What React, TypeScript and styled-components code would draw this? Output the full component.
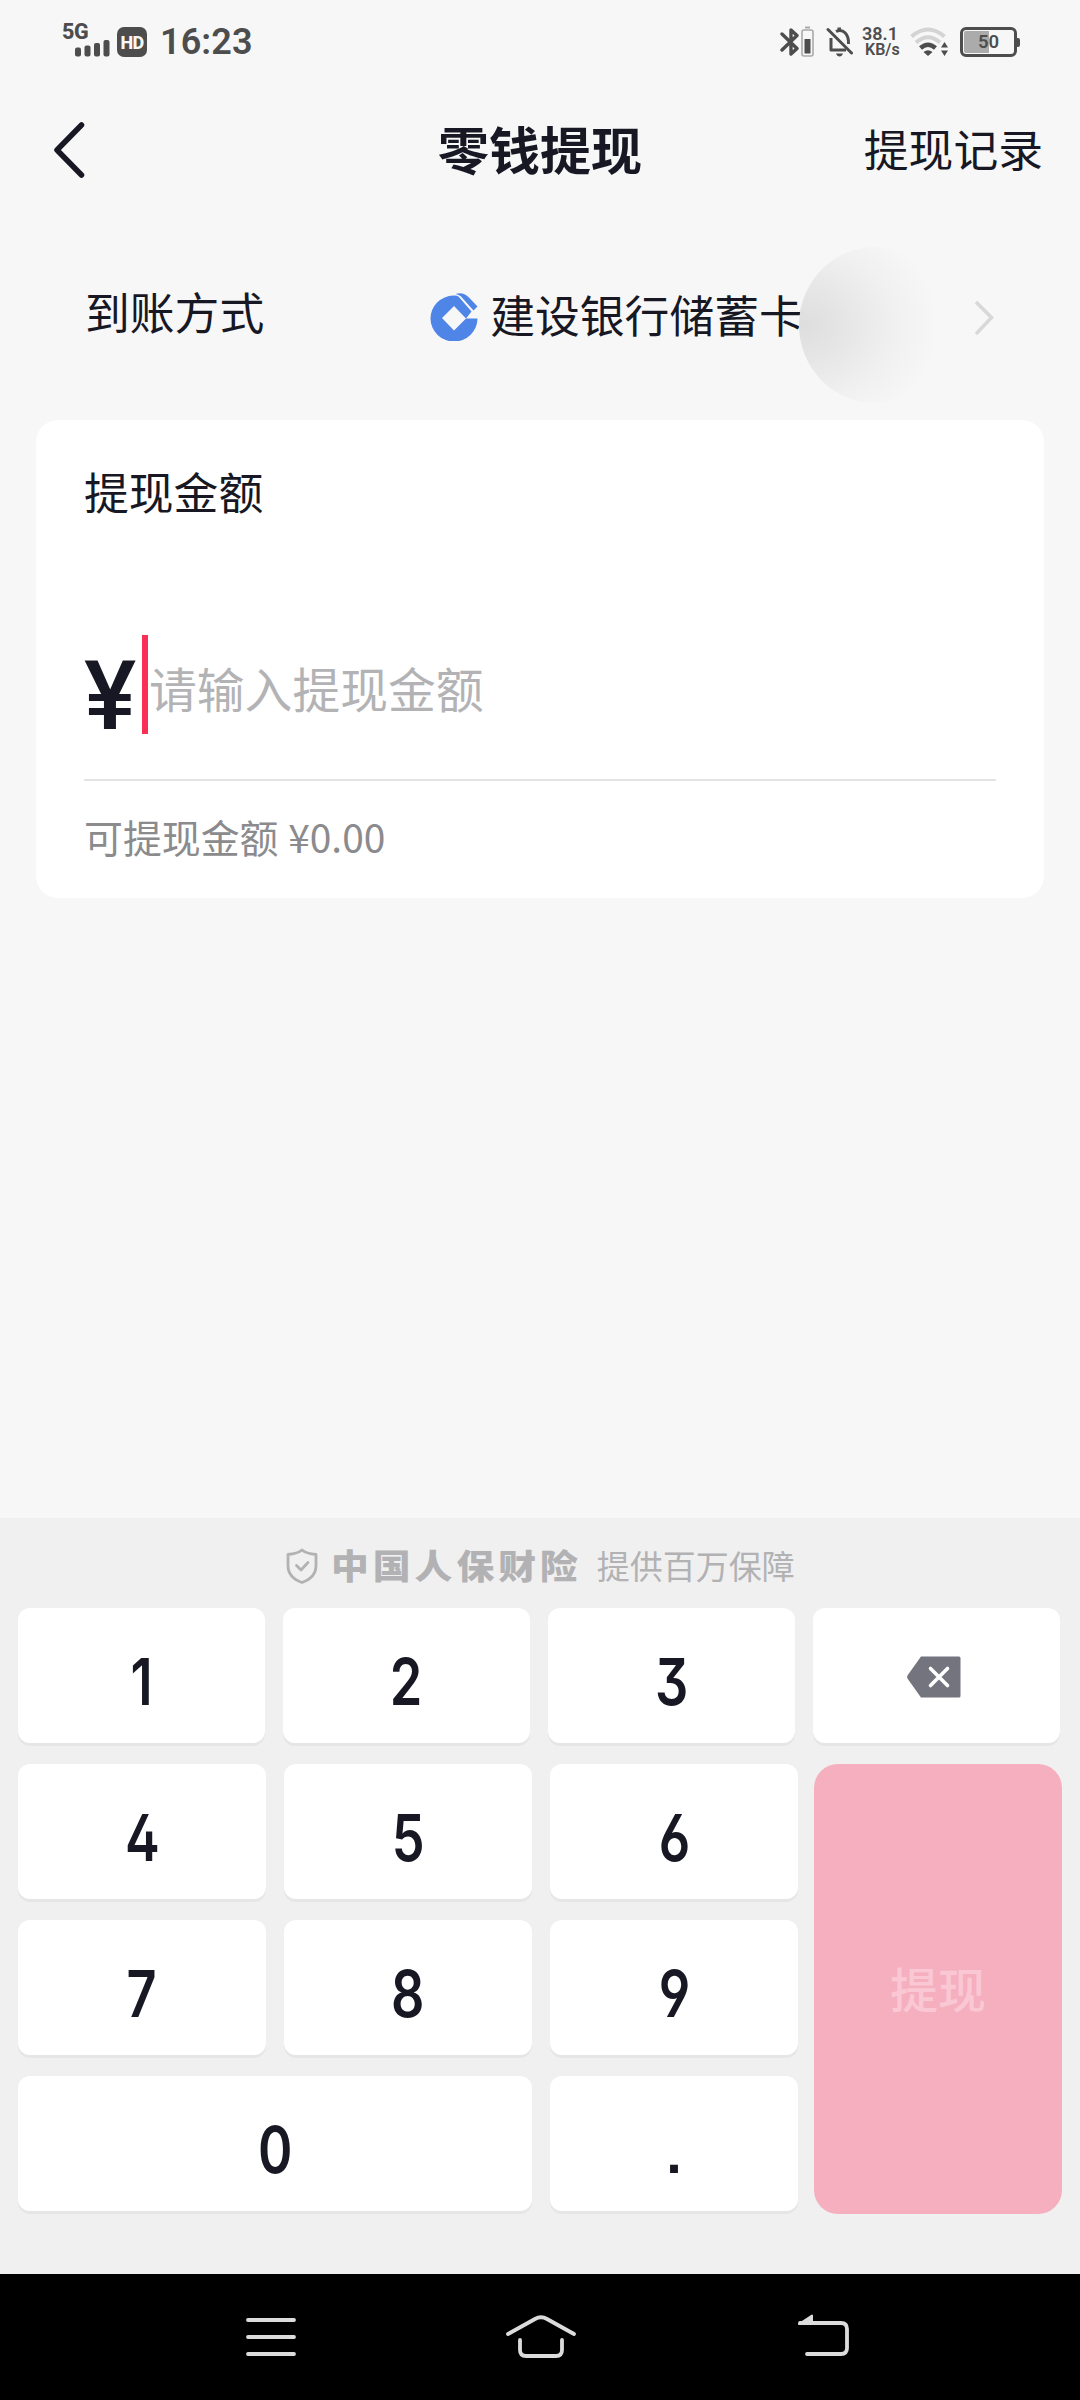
import React from "react";
import styled, { createGlobalStyle } from "styled-components";

const ink = "#171823";
const cjk = '"Noto Sans CJK SC", sans-serif';

const GlobalStyle = createGlobalStyle`
  * { box-sizing: border-box; }
  body { margin: 0; background: #f7f7f8; }
  button { border: 0; margin: 0; padding: 0; background: none; font: inherit; color: inherit; }
  svg { display: block; flex: none; }
`;

const Screen = styled.div`
  width: 1080px;
  height: 2400px;
  display: flex;
  flex-direction: column;
  background: #f7f7f8;
  color: ${ink};
  font-family: ${cjk};
  overflow: hidden;
`;

const StatusBar = styled.div`
  height: 84px;
  flex: none;
  display: flex;
  justify-content: space-between;
  padding: 0 60px 0 62px;
  color: #4d4d4d;
  font-family: Roboto, sans-serif;
`;

const StatusGroup = styled.div`
  display: flex;
  height: 84px;
  align-items: center;
`;

const Network = styled.div`
  display: flex;
  flex-direction: column;
  width: 48px;
  height: 34px;
  margin: 0 7px 5px 0;
`;

const NetworkType = styled.span`
  padding-top: 1px;
  font-size: 21.5px;
  line-height: 16px;
  font-weight: 800;
  letter-spacing: -0.5px;
`;

const SignalIcon = styled.svg`
  margin-left: 13px;
`;

const HdBadge = styled.span`
  width: 30px;
  height: 30px;
  border-radius: 7px;
  background: #4d4d4d;
  color: #f7f7f8;
  display: flex;
  align-items: center;
  justify-content: center;
  font-size: 18px;
  font-weight: 800;
  letter-spacing: -0.6px;
`;

const Clock = styled.span`
  margin-left: 13px;
  font-size: 36px;
  line-height: 40px;
  font-weight: 600;
  letter-spacing: 0.1px;
`;

const BellBox = styled.span`
  margin-left: 12px;
`;

const Speed = styled.div`
  width: 40px;
  margin: 0 8px 0 8px;
  display: flex;
  flex-direction: column;
  gap: 2px;
  font-weight: 600;
  font-size: 18px;
  line-height: 14px;
`;

const SpeedUnit = styled.span`
  padding-left: 3px;
  font-size: 16px;
`;

const BatteryBox = styled.div`
  display: flex;
  align-items: center;
  margin-left: 12px;
`;

const Battery = styled.div`
  width: 57px;
  height: 30px;
  border: 3px solid #4d4d4d;
  border-radius: 6px;
  display: flex;
  align-items: center;
  justify-content: center;
  background: linear-gradient(90deg, #ababab 50%, #f7f7f8 50%);
  background-clip: content-box;
  padding: 1px;
  font-size: 18.5px;
  line-height: 22px;
  font-weight: 600;
`;

const BatteryTip = styled.span`
  width: 3px;
  height: 9px;
  background: #4d4d4d;
  border-radius: 0 2px 2px 0;
`;

const Header = styled.header`
  height: 132px;
  flex: none;
  display: grid;
  grid-template-columns: 1fr auto 1fr;
  align-items: center;
  padding: 0 37px 0 52px;
`;

const Title = styled.h1`
  margin: 0 0 5px -15px;
  font-size: 51px;
  line-height: 70px;
  font-weight: 700;
`;

const RecordLink = styled.button`
  justify-self: end;
  margin-bottom: 4px;
  font-size: 44.8px;
  line-height: 66px;
`;

const MethodRow = styled.section`
  position: relative;
  height: 204px;
  flex: none;
  display: flex;
  align-items: flex-start;
  padding: 62px 85px 0;
`;

const Label = styled.span`
  font-size: 44.8px;
  line-height: 66px;
`;

const Bank = styled.div`
  display: flex;
  align-items: center;
  gap: 12px;
  margin: 3px 0 0 166px;
`;

const LogoBox = styled.span`
  padding-top: 6px;
`;

const Smudge = styled.div`
  position: absolute;
  left: 799px;
  top: 31px;
  width: 152px;
  height: 156px;
  border-radius: 50%;
  background: radial-gradient(ellipse 136px 112px at 4px 78px, #dedede 0%, #e6e6e7 32%, #f0f0f1 66%, #f7f7f8 100%);
`;

const RowArrow = styled.div`
  margin: 22px 0 0 auto;
`;

const Card = styled.section`
  height: 478px;
  flex: none;
  margin: 0 36px;
  padding: 38px 48px 0;
  border-radius: 22px;
  background: #fff;
  display: flex;
  flex-direction: column;
`;

const AmountRow = styled.div`
  display: flex;
  align-items: flex-start;
  height: 146px;
  margin-top: 111px;
  border-bottom: 2px solid #e3e3e4;
`;

const Yen = styled.span`
  width: 58px;
  padding-top: 12px;
  font-family: Roboto, sans-serif;
  font-size: 95.500px;
  line-height: 99px;
  font-weight: 500;
  transform: scaleX(1.03);
  transform-origin: left;
`;

const Caret = styled.span`
  width: 6px;
  height: 99px;
  background: #fa2f56;
`;

const Placeholder = styled.span`
  margin: 18px 0 0 1px;
  font-size: 47.8px;
  line-height: 70px;
  color: #b3b3b5;
`;

const Available = styled.p`
  margin: 27px 0 0 0;
  font-size: 38.9px;
  line-height: 56px;
  color: #8b8b8e;
  word-spacing: 1px;
`;

const Panel = styled.section`
  margin-top: auto;
  height: 756px;
  flex: none;
  background: #f0f0f0;
  display: flex;
  flex-direction: column;
  padding: 0 18px;
`;

const Insurance = styled.div`
  height: 90px;
  display: flex;
  align-items: center;
  padding: 4px 0 0 268px;
  color: #b2b2b5;
`;

const Insurer = styled.span`
  margin-left: 13px;
  font-size: 37.8px;
  line-height: 50px;
  font-weight: 900;
  letter-spacing: 4px;
  transform: scaleY(0.9);
`;

const Cover = styled.span`
  margin-left: 15px;
  font-size: 33px;
  line-height: 50px;
`;

const KeyRow = styled.div`
  display: grid;
  grid-template-columns: repeat(4, 247px);
  gap: 18px;
  margin-bottom: 21px;
`;

const LowerKeys = styled.div`
  display: flex;
  gap: 16px;
`;

const NumberGrid = styled.div`
  display: grid;
  grid-template-columns: repeat(3, 248px);
  gap: 21px 18px;
  align-content: start;
`;

const Key = styled.button<{ $span?: number }>`
  grid-column: span ${(p) => p.$span ?? 1};
  height: 135px;
  border-radius: 12px;
  background: #fff;
  box-shadow: 0 3px 0 #e6e6e6;
  display: flex;
  align-items: center;
  justify-content: center;
`;

const Digit = styled.span`
  display: block;
  padding-top: 12px;
  font-family: Inter, sans-serif;
  font-feature-settings: "ss01", "cv02", "cv03", "cv04";
  font-size: 64.5px;
  line-height: 78px;
  font-weight: 560;
  transform: scaleX(0.81);
`;

const Point = styled(Digit)`
  padding-top: 20px;
  font-family: "Liberation Sans", sans-serif;
  font-size: 56px;
  font-weight: 700;
  transform: none;
`;

const BackspaceBox = styled.span`
  padding: 2px 5px 0 0;
`;

const Submit = styled.button`
  width: 248px;
  height: 450px;
  border-radius: 24px;
  background: #f5afbf;
  color: #f9c8d4;
  font-size: 48px;
  font-weight: 500;
  line-height: 66px;
  padding-bottom: 5px;
`;

const NavBar = styled.nav`
  height: 126px;
  flex: none;
  background: #000;
  display: flex;
  align-items: flex-start;
  padding: 38px 0 0 242px;
`;

const NavButton = styled.button<{ $gap?: number }>`
  margin-left: ${(p) => p.$gap ?? 0}px;
`;

const SignalBars = () => (
  <SignalIcon width="36" height="17" viewBox="0 0 36 17" fill="#4d4d4d">
    <rect x="0" y="7.5" width="6" height="9" rx="2" />
    <rect x="9.5" y="5.5" width="6" height="11" rx="2" />
    <rect x="19" y="3" width="6" height="13.5" rx="2" />
    <rect x="28.5" y="0" width="6" height="16.5" rx="2" />
  </SignalIcon>
);

const Bluetooth = () => (
  <svg width="34" height="32" viewBox="0 0 34 32" fill="none">
    <path d="M2 8 17 22.500 11 28V4L17 9.500 2 24" stroke="#4d4d4d" strokeWidth="3.400" strokeLinecap="round" strokeLinejoin="round" />
    <path d="M25 1.500h5" stroke="#aaa" strokeWidth="2" />
    <rect x="22" y="4" width="11" height="26" rx="2" stroke="#aaa" strokeWidth="1.600" />
    <rect x="24.500" y="13" width="6" height="14.500" fill="#4d4d4d" />
  </svg>
);

const MutedBell = () => (
  <svg width="28" height="32" viewBox="0 0 28 32" fill="none" stroke="#4d4d4d" strokeWidth="3">
    <path d="M2 3.500 25.500 27" strokeLinecap="round" />
    <path d="M5 12V24H20" strokeLinejoin="round" />
    <path d="M10 5.500C17 2 23 8 22.500 18" />
    <path d="M11.500 1.500h3.500v3h-3.500z" fill="#4d4d4d" stroke="none" />
    <path d="M10 27.500h7q-1 3-3.500 3T10 27.500z" fill="#4d4d4d" stroke="none" />
  </svg>
);

const Wifi = () => (
  <svg width="38" height="32" viewBox="0 0 38 32" fill="none">
    <path d="M1.500 10.500Q18 -3.500 34.500 10.500" stroke="#d4d4d4" strokeWidth="4" />
    <path d="M6 16.500Q18 6 30 16.500" stroke="#d4d4d4" strokeWidth="4" />
    <path d="M10.500 22Q18 15.500 25.500 22" stroke="#4d4d4d" strokeWidth="4.500" />
    <path d="M13.500 26Q18 22.500 22.500 26L18 30z" fill="#4d4d4d" />
    <path d="M31 21.500h7L34.500 16zM31 24.500h7L34.500 30z" fill="#4d4d4d" />
  </svg>
);

const BackChevron = () => (
  <svg width="36" height="60" viewBox="0 0 36 60" fill="none">
    <path d="M29.500 5 5 30 29.500 55" stroke={ink} strokeWidth="5.500" strokeLinecap="round" strokeLinejoin="round" />
  </svg>
);

const BankLogo = () => (
  <svg width="48" height="48" viewBox="0 0 48 48">
    <path
      d="M23.500 2.500Q27 2.300 28.500 3.500L41.500 18.500 36 25.500H47.500A23.500 23 0 1 1 23.500 2.500ZM24 13 12 25 24 37.500 36 25.500Z"
      fill="#5085e8"
      fillRule="evenodd"
    />
    <path d="M25.500 1Q33-1.500 38.500 4L47.500 13.500 43.500 17.500 31 3.500Q29 1.500 25.500 1Z" fill="#5085e8" />
  </svg>
);

const SmallChevron = () => (
  <svg width="21" height="36" viewBox="0 0 21 36" fill="none">
    <path d="M2 2 17.500 17.500 2 34" stroke="#d8d8da" strokeWidth="3.500" />
  </svg>
);

const Shield = () => (
  <svg width="32" height="37" viewBox="0 -1.5 32 37" fill="none" stroke="#b2b2b5" strokeLinecap="round" strokeLinejoin="round">
    <path d="M16 1.500Q20 5 30 6V17Q30 29 16 34 2 29 2 17V6Q12 5 16 1.500Z" strokeWidth="2.800" />
    <path d="M10.500 17 15 21.500 22 14" strokeWidth="2.800" />
  </svg>
);

const Backspace = () => (
  <svg width="54" height="42" viewBox="0 0 54 42">
    <path d="M14 .5H52q1.500 0 1.500 1.500V40q0 1.500-1.500 1.500H14L.8 23q-1.300-2 0-4Z" fill="#73747e" />
    <path d="M23.500 12.500 40.500 29.500M40.500 12.500 23.500 29.500" stroke="#fff" strokeWidth="3.600" strokeLinecap="round" />
  </svg>
);

const NavIcon = ({ width, children }: { width: number; children: React.ReactNode }) => (
  <svg width={width} height="50" viewBox={`0 0 ${width} 50`} fill="none" stroke="#dcdcdc" strokeWidth="3.800" strokeLinecap="round" strokeLinejoin="round">
    {children}
  </svg>
);

export default function App() {
  return (
    <Screen>
      <GlobalStyle />
      <StatusBar>
        <StatusGroup>
          <Network>
            <NetworkType>5G</NetworkType>
            <SignalBars />
          </Network>
          <HdBadge>HD</HdBadge>
          <Clock>16:23</Clock>
        </StatusGroup>
        <StatusGroup>
          <Bluetooth />
          <BellBox>
            <MutedBell />
          </BellBox>
          <Speed>
            <span>38.1</span>
            <SpeedUnit>KB/s</SpeedUnit>
          </Speed>
          <Wifi />
          <BatteryBox>
            <Battery>50</Battery>
            <BatteryTip />
          </BatteryBox>
        </StatusGroup>
      </StatusBar>

      <Header>
        <BackChevron />
        <Title>零钱提现</Title>
        <RecordLink>提现记录</RecordLink>
      </Header>

      <MethodRow>
        <Label>到账方式</Label>
        <Bank>
          <LogoBox>
            <BankLogo />
          </LogoBox>
          <Label>建设银行储蓄卡</Label>
        </Bank>
        <Smudge />
        <RowArrow>
          <SmallChevron />
        </RowArrow>
      </MethodRow>

      <Card>
        <Label>提现金额</Label>
        <AmountRow>
          <Yen>¥</Yen>
          <Caret />
          <Placeholder>请输入提现金额</Placeholder>
        </AmountRow>
        <Available>可提现金额 ¥0.00</Available>
      </Card>

      <Panel>
        <Insurance>
          <Shield />
          <Insurer>中国人保财险</Insurer>
          <Cover>提供百万保障</Cover>
        </Insurance>
        <KeyRow>
          {["1", "2", "3"].map((n) => (
            <Key key={n}>
              <Digit>{n}</Digit>
            </Key>
          ))}
          <Key aria-label="删除">
            <BackspaceBox>
              <Backspace />
            </BackspaceBox>
          </Key>
        </KeyRow>
        <LowerKeys>
          <NumberGrid>
            {["4", "5", "6", "7", "8", "9"].map((n) => (
              <Key key={n}>
                <Digit>{n}</Digit>
              </Key>
            ))}
            <Key $span={2}>
              <Digit>0</Digit>
            </Key>
            <Key>
              <Point>.</Point>
            </Key>
          </NumberGrid>
          <Submit>提现</Submit>
        </LowerKeys>
      </Panel>

      <NavBar>
        <NavButton>
          <NavIcon width={58}>
            <path d="M6 8H52M6 25H52M6 42H52" />
          </NavIcon>
        </NavButton>
        <NavButton $gap={202}>
          <NavIcon width={78}>
            <path d="M6 22 33 7Q39 3.500 45 7L72 22M18 28V38Q18 44 24 44H54Q60 44 60 38V28" />
          </NavIcon>
        </NavButton>
        <NavButton $gap={214}>
          <NavIcon width={58}>
            <path d="M6 11H47Q53 11 53 17V36Q53 42 47 42H13" />
            <path d="M5 12 18 3.500V12Z" fill="#dcdcdc" strokeWidth="2" />
          </NavIcon>
        </NavButton>
      </NavBar>
    </Screen>
  );
}
